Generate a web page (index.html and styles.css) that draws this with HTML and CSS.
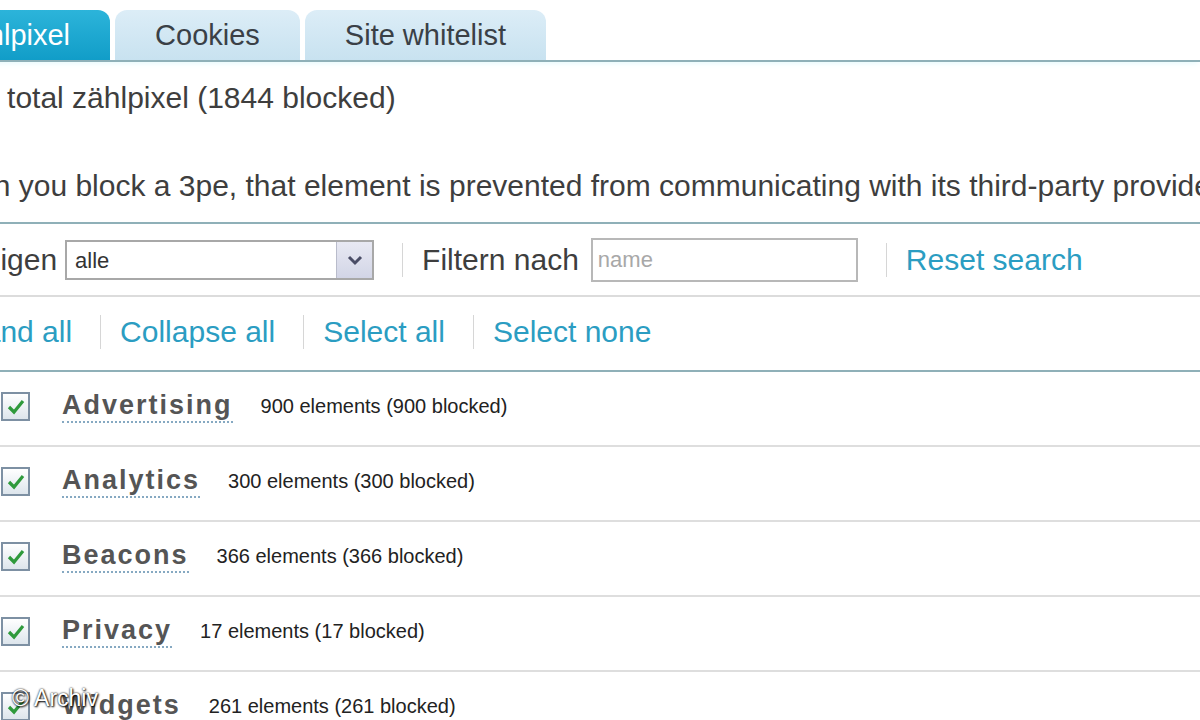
FILE: index.html
```html
<!doctype html>
<html lang="de">
  <head>
    <meta charset="utf-8" />
    <title>Zählpixel</title>
    <link rel="stylesheet" href="styles.css">
  </head>
  <body>
    <div class="page">
      <nav class="tabs">
        <a class="tab active">Zählpixel</a>
        <a class="tab">Cookies</a>
        <a class="tab">Site whitelist</a>
      </nav>

      <p class="summary">1844 total zählpixel (1844 blocked)</p>
      <p class="intro">When you block a 3pe, that element is prevented from communicating with its third-party provider.</p>

      <!-- Filter bar -->
      <div class="toolbar filter">
        <span class="label">Anzeigen</span>
        <div class="select">
          <span class="select-value">alle</span>
          <span class="select-button">
            <svg width="18" height="12" viewBox="0 0 18 12"><path d="M3 3l6 6 6-6" fill="none" stroke="#4a4d66" stroke-width="3"/></svg>
          </span>
        </div>
        <span class="sep"></span>
        <span class="label">Filtern nach</span>
        <input class="search" type="text" placeholder="name">
        <span class="sep"></span>
        <a class="link">Reset search</a>
      </div>

      <!-- Bulk actions -->
      <div class="toolbar actions">
        <a class="link">Expand all</a>
        <span class="sep"></span>
        <a class="link">Collapse all</a>
        <span class="sep"></span>
        <a class="link">Select all</a>
        <span class="sep"></span>
        <a class="link">Select none</a>
      </div>

      <ul class="categories">
        <li class="category">
          <span class="toggle"></span>
          <span class="check"><svg width="20" height="18" viewBox="0 0 20 18"><path d="M3 9l5 5 9-11" fill="none" stroke="#2f9a3c" stroke-width="3.2"/></svg></span>
          <span class="name">Advertising</span>
          <span class="count">900 elements (900 blocked)</span>
        </li>
        <li class="category">
          <span class="toggle"></span>
          <span class="check"><svg width="20" height="18" viewBox="0 0 20 18"><path d="M3 9l5 5 9-11" fill="none" stroke="#2f9a3c" stroke-width="3.2"/></svg></span>
          <span class="name">Analytics</span>
          <span class="count">300 elements (300 blocked)</span>
        </li>
        <li class="category">
          <span class="toggle"></span>
          <span class="check"><svg width="20" height="18" viewBox="0 0 20 18"><path d="M3 9l5 5 9-11" fill="none" stroke="#2f9a3c" stroke-width="3.2"/></svg></span>
          <span class="name">Beacons</span>
          <span class="count">366 elements (366 blocked)</span>
        </li>
        <li class="category">
          <span class="toggle"></span>
          <span class="check"><svg width="20" height="18" viewBox="0 0 20 18"><path d="M3 9l5 5 9-11" fill="none" stroke="#2f9a3c" stroke-width="3.2"/></svg></span>
          <span class="name">Privacy</span>
          <span class="count">17 elements (17 blocked)</span>
        </li>
        <li class="category">
          <span class="toggle"></span>
          <span class="check"><svg width="20" height="18" viewBox="0 0 20 18"><path d="M3 9l5 5 9-11" fill="none" stroke="#2f9a3c" stroke-width="3.2"/></svg></span>
          <span class="name">Widgets</span>
          <span class="count">261 elements (261 blocked)</span>
        </li>
      </ul>
    </div>

    <div class="credit">© Archiv</div>
  </body>
</html>
```

FILE: styles.css
```css
* {
  box-sizing: border-box;
}

html,
body {
  height: 100%;
  overflow: hidden;
}

body {
  margin: 0;
  position: relative;
  background: #fff;
  color: #3e3e3e;
  font-family: 'Liberation Sans', Arial, sans-serif;
  font-size: 30px;
}

.page {
  margin-left: -68px;
  white-space: nowrap;
}

/* Tabs */

.tabs {
  display: flex;
  gap: 5px;
  margin-left: -18px;
  padding-top: 10px;
  border-bottom: 2px solid #8fb0b8;
  box-shadow: 0 3px 6px -2px #e2f9fc;
}

.tab {
  height: 50px;
  line-height: 50px;
  padding: 0 40px;
  font-size: 29px;
  color: #3a4046;
  border-radius: 12px 12px 0 0;
  background: linear-gradient(#dcedf7, #c8e2f0);
}

.tab.active {
  color: #fff;
  background: linear-gradient(#2cb4da, #119dc8);
}

/* Intro text */

.summary,
.intro {
  margin: 0;
  line-height: 36px;
}

.summary {
  margin-top: 18px;
}

.intro {
  margin-top: 52px;
  margin-bottom: 18px;
}

/* Toolbars */

.toolbar {
  display: flex;
  align-items: center;
  height: 75px;
}

.filter {
  border-top: 2px solid #8fb0b8;
  border-bottom: 2px solid #dcdcdc;
}

.actions {
  border-bottom: 2px solid #8fb0b8;
  padding-bottom: 4px;
}

.label {
  margin-right: 8px;
}

.sep {
  width: 1px;
  height: 34px;
  margin: 0 19px 0 28px;
  background: #d6d6d6;
}

.link {
  color: #2b9dc2;
  cursor: pointer;
}

.select {
  display: flex;
  width: 309px;
  height: 40px;
  border: 2px solid #a8a8a8;
  background: #fff;
}

.select-value {
  flex: 1;
  padding-left: 8px;
  font-size: 22px;
  line-height: 38px;
  color: #333;
}

.select-button {
  display: flex;
  align-items: center;
  justify-content: center;
  width: 36px;
  background: linear-gradient(#e8e9f3, #d2d5e6);
  border-left: 1px solid #b9bccb;
}

.search {
  width: 267px;
  height: 44px;
  margin-left: 4px;
  padding: 0 5px;
  border: 2px solid #b8b8b8;
  font-family: inherit;
  font-size: 22px;
  color: #333;
  outline: none;
}

.search::placeholder {
  color: #a8a8a8;
}

/* Category list */

.categories {
  list-style: none;
  margin: 0;
  padding: 0;
}

.category {
  display: flex;
  align-items: center;
  height: 75px;
  padding-bottom: 4px;
  border-bottom: 2px solid #dedede;
}

.toggle {
  width: 0;
  height: 0;
  margin: 0 26px 0 30px;
  border-left: 13px solid #999;
  border-top: 8px solid transparent;
  border-bottom: 8px solid transparent;
}

.check {
  display: flex;
  align-items: center;
  justify-content: center;
  width: 29px;
  height: 29px;
  margin-right: 32px;
  border: 2px solid #7d90a3;
  background: linear-gradient(#fff, #dde5ec);
}

.name {
  font-size: 27px;
  font-weight: bold;
  letter-spacing: 2px;
  color: #555;
  padding-bottom: 1px;
  border-bottom: 2px dotted #86a9c2;
  line-height: 30px;
}

.count {
  margin-left: 28px;
  font-size: 20px;
  color: #222;
}

/* Watermark */

.credit {
  position: absolute;
  left: 12px;
  bottom: 8px;
  font-size: 23px;
  color: #fff;
  text-shadow: 0 0 2px #000, 1px 1px 2px #000;
}
```
